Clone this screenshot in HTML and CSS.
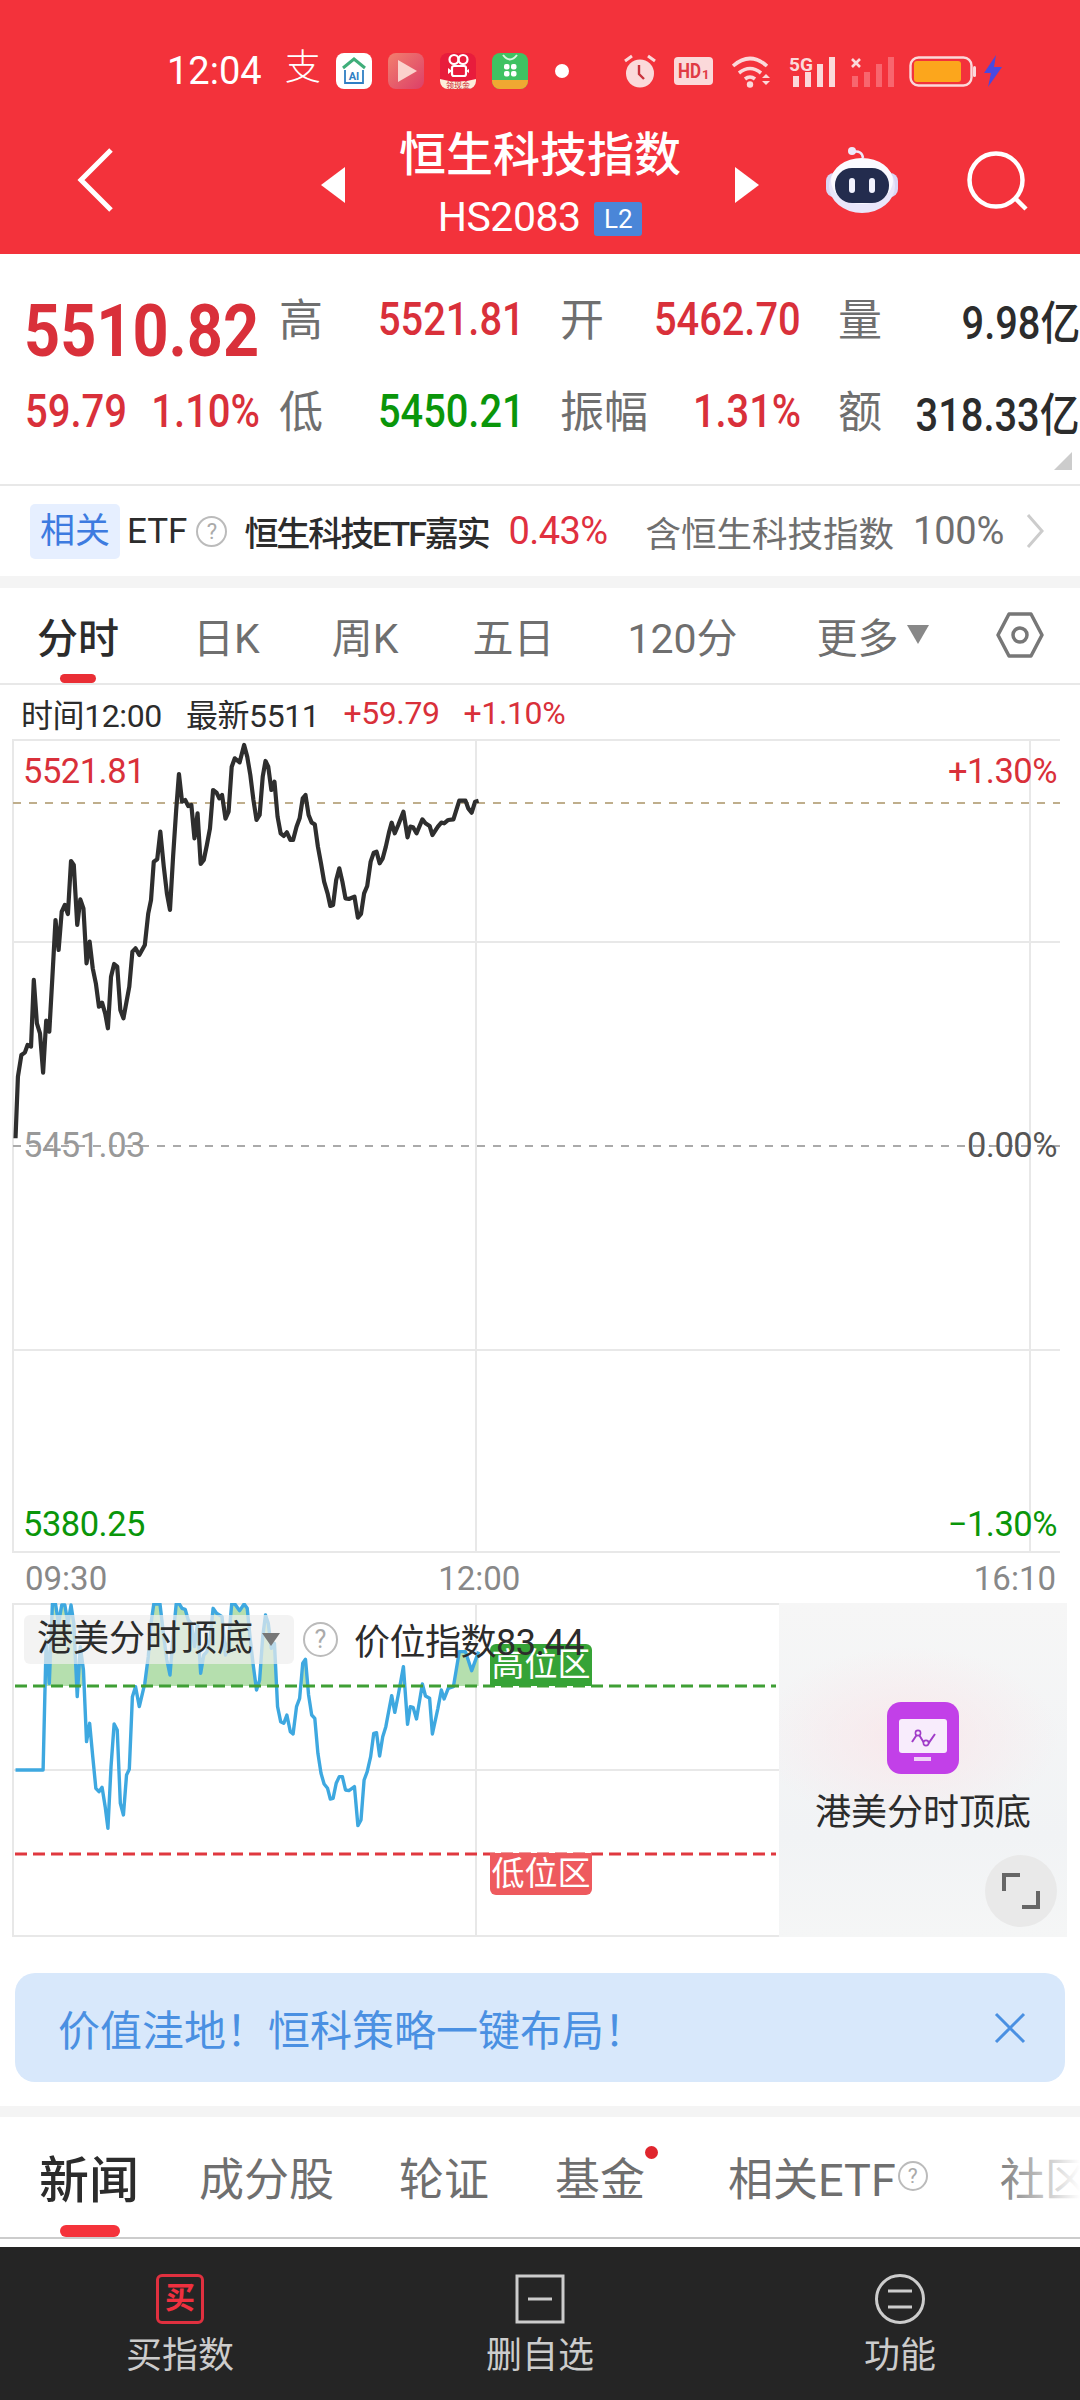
FILE: index.html
```html
<!DOCTYPE html>
<html lang="zh-CN">
  <head>
    <meta charset="UTF-8" />
    <meta name="viewport" content="width=device-width, initial-scale=1.0" />
    <title>恒生科技指数</title>
    <link rel="stylesheet" href="styles.css">
  </head>
  <body>
    <div class="page">
      <header class="topbar">
        <div class="status">
          <span class="clock">12:04</span>
          <span class="st-ali">支</span>
          <svg class="st-app" width="36" height="36" viewBox="0 0 36 36"><rect width="36" height="36" rx="8" fill="#fff"/><path d="M7 15 18 6l11 9" fill="none" stroke="#3fae7a" stroke-width="3"/><path d="M9 17v13h18V17" fill="none" stroke="#2f7fc4" stroke-width="1.8"/><text x="18" y="27" text-anchor="middle" font-size="11" font-weight="700" fill="#2f7fc4">AI</text></svg>
          <svg class="st-app" width="36" height="36" viewBox="0 0 36 36"><defs><linearGradient id="vid" x1="0" y1="0" x2="1" y2="1"><stop offset="0" stop-color="#f27f6e"/><stop offset="1" stop-color="#dc3f68"/></linearGradient></defs><rect width="36" height="36" rx="8" fill="url(#vid)"/><path d="M10 7l19 11-19 11z" fill="#fbd2cc"/></svg>
          <svg class="st-app" width="36" height="36" viewBox="0 0 36 36"><rect width="36" height="36" rx="8" fill="#e81c3c"/><circle cx="14" cy="6.500" r="4.500" fill="none" stroke="#fff" stroke-width="2.200"/><circle cx="23" cy="6.500" r="4.500" fill="none" stroke="#fff" stroke-width="2.200"/><rect x="12" y="13" width="14" height="10" rx="2" fill="none" stroke="#fff" stroke-width="2.200"/><path d="M8 15v6l4-3zM26 18l3-2v4z" fill="#fff"/><path d="M0 26q18 5 36 0v2a8 8 0 0 1-8 8H8a8 8 0 0 1-8-8z" fill="#fdeeda"/><text x="18" y="34.500" text-anchor="middle" font-size="8" fill="#c8202f">领现金</text></svg>
          <svg class="st-app" width="36" height="36" viewBox="0 0 36 36"><rect width="36" height="36" rx="8" fill="#3fc262"/><path d="M11 2q7 9 14 0" fill="none" stroke="#d8f5de" stroke-width="2"/><rect x="12" y="11" width="5.500" height="5.500" rx="2" fill="#fff"/><rect x="19" y="11" width="5.500" height="5.500" rx="2" fill="#fff"/><rect x="12" y="18" width="5.500" height="5.500" rx="2" fill="#fff"/><rect x="19" y="18" width="5.500" height="5.500" rx="2" fill="#fff"/><path d="M0 27h36v1a8 8 0 0 1-8 8H8a8 8 0 0 1-8-8z" fill="#f0a832"/></svg>
          <span class="st-dot"></span>
          <svg class="st-alarm" width="32" height="34" viewBox="0 0 32 34"><circle cx="16" cy="19.500" r="14" fill="#fbd9da"/><path d="M15 11v9l5 5" fill="none" stroke="#c8323c" stroke-width="2.400"/><path d="M1 7l7-5M31 7l-7-5" stroke="#fbd9da" stroke-width="3"/></svg>
          <svg class="st-hd" width="39" height="28" viewBox="0 0 39 28"><rect width="39" height="28" rx="4" fill="#fbd9da"/><text x="4" y="21" font-size="20" font-weight="700" fill="#e03a44" textLength="23" lengthAdjust="spacingAndGlyphs">HD</text><text x="28" y="22" font-size="13" font-weight="700" fill="#e03a44">1</text></svg>
          <svg class="st-wifi" width="39" height="33" viewBox="0 0 39 33"><path d="M1 11q17-15 34 0M7 18q11-9 22 0M13 24q5-4 10 0" fill="none" stroke="#fbd9da" stroke-width="3.600"/><circle cx="18" cy="29.500" r="3.200" fill="#fbd9da"/><path d="M30 23l4-4 4 4zM30 26l4 4 4-4z" fill="#fbd9da"/></svg>
          <svg class="st-sig" width="47" height="33" viewBox="0 0 47 33"><text x="0" y="16" font-size="19" font-weight="700" fill="#fbd9da" textLength="24" lengthAdjust="spacingAndGlyphs">5G</text><path d="M4 21h6v11H4zM16 17h6v15h-6zM28 9h6v23h-6zM40 2h6v30h-6z" fill="#fbd9da"/></svg>
          <svg class="st-sig2" width="44" height="33" viewBox="0 0 44 33"><path d="M1 21h6v11H1zM13 17h6v15h-6zM25 9h6v23h-6zM37 2h6v30h-6z" fill="#f8666e"/><path d="M1 4l8 8M9 4l-8 8" stroke="#fbd9da" stroke-width="2.600"/></svg>
          <svg class="st-bat" width="67" height="31" viewBox="0 0 67 31"><rect x="1.500" y="1.500" width="61" height="28" rx="8" fill="none" stroke="#fbd9da" stroke-width="2.400"/><rect x="5" y="5" width="47" height="21" rx="3" fill="#fca61c"/><rect x="64" y="10" width="3" height="11" rx="1.500" fill="#fbd9da"/></svg>
          <svg class="st-bolt" width="20" height="32" viewBox="0 0 20 32"><path d="M13 0 1 18h7l-3 14L19 12h-8z" fill="#4a4ae0"/></svg>
        </div>
        <div class="nav">
          <svg class="nav-back" width="37" height="66" viewBox="0 0 37 66"><path d="M34 3 4 33l30 30" fill="none" stroke="#fff" stroke-width="5"/></svg>
          <svg class="nav-arrow-l" width="24" height="36" viewBox="0 0 24 36"><path d="M24 0v36L0 18z" fill="#fff"/></svg>
          <div class="nav-title">
            <h1>恒生科技指数</h1>
            <div class="nav-code">HS2083 <span class="badge-l2">L2</span></div>
          </div>
          <svg class="nav-arrow-r" width="24" height="36" viewBox="0 0 24 36"><path d="M0 0v36l24-18z" fill="#fff"/></svg>
          <svg class="nav-robot" width="72" height="67" viewBox="0 0 72 67"><path d="M27 5q9-2 10 6" fill="none" stroke="#eee9fa" stroke-width="2.500"/><circle cx="26" cy="4" r="4" fill="#eee9fa"/><rect x="0" y="26" width="72" height="24" rx="8" fill="#d9d6f4"/><ellipse cx="36" cy="39" rx="33" ry="27" fill="#e9e6fa"/><ellipse cx="36" cy="34" rx="31" ry="23" fill="#fbfaff"/><rect x="9" y="21" width="54" height="35" rx="17" fill="#232c4e"/><rect x="23" y="31" width="6" height="15" rx="3" fill="#f2f3ff"/><rect x="43" y="31" width="6" height="15" rx="3" fill="#f2f3ff"/></svg>
          <svg class="nav-search" width="62" height="62" viewBox="0 0 62 62"><circle cx="30" cy="30" r="26.500" fill="none" stroke="#fff" stroke-width="4.500"/><path d="M50 49l10 10" stroke="#fff" stroke-width="4.500"/></svg>
        </div>
      </header>

      <section class="quote">
        <div class="q-main">
          <div class="q-price">5510.82</div>
        </div>
        <div class="q-cell q-first"><span class="q-label">高</span><span class="q-val up">5521.81</span></div>
        <div class="q-cell q-pad"><span class="q-label">开</span><span class="q-val up">5462.70</span></div>
        <div class="q-cell q-pad2"><span class="q-label">量</span><span class="q-val dark">9.98亿</span></div>
        <div class="q-change up"><span class="q-c1">59.79</span><span class="q-c2">1.10%</span></div>
        <div class="q-cell q-first"><span class="q-label">低</span><span class="q-val down">5450.21</span></div>
        <div class="q-cell q-pad"><span class="q-label">振幅</span><span class="q-val up">1.31%</span></div>
        <div class="q-cell q-pad2"><span class="q-label">额</span><span class="q-val dark">318.33亿</span></div>
        <span class="q-corner"></span>
      </section>

      <section class="etf">
        <span class="etf-tag">相关</span>
        <span class="etf-name">ETF</span>
        <span class="help">?</span>
        <span class="etf-fund">恒生科技ETF嘉实</span>
        <span class="etf-pct">0.43%</span>
        <span class="etf-desc">含恒生科技指数</span>
        <span class="etf-share">100%</span>
        <svg width="18" height="36" viewBox="0 0 18 36"><path d="M2 2l14 16L2 34" fill="none" stroke="#ccc" stroke-width="3"/></svg>
      </section>

      <div class="band"></div>

      <nav class="periods">
        <span class="period active">分时</span>
        <span class="period p-day">日K</span>
        <span class="period p-week">周K</span>
        <span class="period p-five">五日</span>
        <span class="period p-120">120分</span>
        <span class="period p-more">更多</span>
        <span class="more-caret"></span>
        <svg class="period-gear" width="50" height="48" viewBox="0 0 50 48"><path d="M14 3h22l11 21-11 21H14L3 24z" fill="none" stroke="#777" stroke-width="3.500" stroke-linejoin="round"/><circle cx="25" cy="24" r="7" fill="none" stroke="#777" stroke-width="3.500"/></svg>
      </nav>

      <div class="info">
        <span>时间12:00</span>
        <span>最新5511</span>
        <span class="up">+59.79</span>
        <span class="up">+1.10%</span>
      </div>

      <section class="chart">
        <svg class="chart-svg" width="1080" height="814" viewBox="0 739 1080 814">
          <path d="M13 740H1060M13 942H1060M13 1350H1060M13 1552H1060M13 739V1553M476 739V1553M1030 739V1553" fill="none" stroke="#e8e8e8" stroke-width="2"/>
          <path d="M13 803H1060" stroke="#bfae8c" stroke-width="2" stroke-dasharray="8 8"/>
          <path d="M13 1146H1060" stroke="#aaa" stroke-width="2" stroke-dasharray="8 8"/>
          <polyline transform="translate(0 700) scale(.3448 .3333)" vector-effect="non-scaling-stroke" fill="none" stroke="#2e2e2e" stroke-width="4.200" stroke-linejoin="round" points="45,1315 52,1130 62,1065 72,1058 80,1035 90,1040 98,840 107,970 116,1000 125,1118 134,962 143,995 152,830 161,660 170,750 179,635 188,615 197,642 206,483 214,495 224,675 233,598 242,625 251,790 260,725 269,805 278,850 287,920 296,908 305,940 313,985 322,830 331,792 340,800 349,930 358,955 375,860 384,755 393,745 404,765 420,735 430,640 438,600 446,485 456,478 465,395 475,500 484,580 493,630 502,470 511,330 519,222 528,305 537,300 546,318 555,315 564,415 573,340 582,492 591,480 600,435 609,385 618,270 628,278 636,295 644,285 654,356 663,335 672,200 681,175 695,187 708,135 717,170 726,225 735,300 744,360 753,345 762,230 770,183 778,200 787,270 796,245 805,350 814,400 823,408 832,397 842,420 850,420 860,380 869,355 878,295 886,285 895,345 904,368 913,373 922,440 931,490 940,545 950,580 958,618 966,615 975,540 984,505 993,545 1002,595 1012,597 1028,590 1038,653 1047,642 1056,580 1065,558 1075,485 1084,458 1092,455 1101,490 1110,475 1119,440 1128,398 1136,368 1145,400 1155,375 1170,335 1182,412 1190,380 1198,382 1208,400 1225,358 1234,370 1246,378 1254,405 1270,380 1280,368 1288,370 1300,360 1315,358 1332,302 1350,302 1358,325 1368,338 1378,305 1388,302"/>
        </svg>
        <span class="c-label c-high up">5521.81</span>
        <span class="c-pct c-high up">+1.30%</span>
        <span class="c-label c-mid muted">5451.03</span>
        <span class="c-pct c-mid zero">0.00%</span>
        <span class="c-label c-low down">5380.25</span>
        <span class="c-pct c-low down">−1.30%</span>
      </section>

      <div class="axis">
        <span>09:30</span>
        <span class="axis-mid">12:00</span>
        <span class="axis-end">16:10</span>
      </div>

      <section class="sub">
        <svg class="sub-svg" width="1080" height="334" viewBox="0 1603 1080 334">
          <defs><clipPath id="high"><rect x="0" y="1603" width="1080" height="83"/></clipPath></defs>
          <path d="M13 1604H780M13 1770H780M13 1936H780M13 1603V1937M476 1603V1937" fill="none" stroke="#e8e8e8" stroke-width="2"/>
          <g clip-path="url(#high)">
            <polygon transform="translate(0 1580) scale(.3448 .3333)" fill="#b5dfae" points="125,570 130,350 134,180 143,310 152,72 161,72 170,130 179,75 188,75 197,130 206,75 214,130 224,350 233,200 242,270 251,485 260,430 269,530 278,625 287,635 296,622 305,680 313,745 322,560 331,432 340,450 349,670 358,705 367,585 375,568 384,350 393,320 404,380 420,310 430,230 438,130 446,72 464,72 475,170 484,240 493,285 502,170 511,72 519,70 528,85 537,88 546,120 555,130 564,200 573,130 582,280 591,225 600,215 609,180 618,85 628,100 636,105 644,110 654,225 663,180 672,72 681,72 695,92 708,72 717,85 726,180 735,260 744,330 753,300 762,170 770,105 778,130 787,205 796,190 805,380 814,425 823,430 832,405 842,455 850,462 860,380 869,355 878,250 886,238 895,345 904,405 913,415 922,520 931,580 940,612 950,625 958,657 966,655 975,610 984,590 993,590 1002,630 1012,632 1028,620 1038,737 1047,720 1056,600 1065,575 1075,530 1084,460 1092,458 1101,528 1110,470 1119,440 1128,390 1136,347 1145,397 1155,345 1170,260 1182,433 1190,380 1198,382 1208,417 1225,312 1234,348 1246,355 1254,462 1270,385 1280,330 1288,357 1300,325 1315,320 1332,215 1350,215 1368,272 1388,215 1388,570"/>
          </g>
          <polyline transform="translate(0 1580) scale(.3448 .3333)" vector-effect="non-scaling-stroke" fill="none" stroke="#3ea8e0" stroke-width="3.400" stroke-linejoin="round" points="45,570 125,570 130,350 134,180 143,310 152,72 161,72 170,130 179,75 188,75 197,130 206,75 214,130 224,350 233,200 242,270 251,485 260,430 269,530 278,625 287,635 296,622 305,680 313,745 322,560 331,432 340,450 349,670 358,705 367,585 375,568 384,350 393,320 404,380 420,310 430,230 438,130 446,72 464,72 475,170 484,240 493,285 502,170 511,72 519,70 528,85 537,88 546,120 555,130 564,200 573,130 582,280 591,225 600,215 609,180 618,85 628,100 636,105 644,110 654,225 663,180 672,72 681,72 695,92 708,72 717,85 726,180 735,260 744,330 753,300 762,170 770,105 778,130 787,205 796,190 805,380 814,425 823,430 832,405 842,455 850,462 860,380 869,355 878,250 886,238 895,345 904,405 913,415 922,520 931,580 940,612 950,625 958,657 966,655 975,610 984,590 993,590 1002,630 1012,632 1028,620 1038,737 1047,720 1056,600 1065,575 1075,530 1084,460 1092,458 1101,528 1110,470 1119,440 1128,390 1136,347 1145,397 1155,345 1170,260 1182,433 1190,380 1198,382 1208,417 1225,312 1234,348 1246,355 1254,462 1270,385 1280,330 1288,357 1300,325 1315,320 1332,215 1350,215 1368,272 1388,215"/>
          <path d="M15 1686H776" stroke="#3f9f35" stroke-width="3" stroke-dasharray="12 6"/>
          <path d="M15 1854H776" stroke="#e0383f" stroke-width="3" stroke-dasharray="12 6"/>
        </svg>
        <span class="zone zone-high">高位区</span>
        <span class="zone zone-low">低位区</span>
        <div class="sub-head">
          <div class="sub-pill">港美分时顶底<span class="sub-caret"></span></div>
          <span class="help help-lg">?</span>
          <span class="sub-index">价位指数83.44</span>
        </div>
        <aside class="sub-side">
          <svg width="72" height="72" viewBox="0 0 72 72"><rect width="72" height="72" rx="14" fill="#c240e8"/><rect x="12" y="17" width="48" height="34" rx="3" fill="#f8ecfc"/><rect x="27" y="55" width="17" height="4" fill="#f0d0f8"/><path d="M25 40l6-9 6 10 4 1 7-10" fill="none" stroke="#a03cc8" stroke-width="2"/><circle cx="31" cy="31" r="2.600" fill="#f8ecfc" stroke="#a03cc8" stroke-width="1.600"/><circle cx="39" cy="41" r="2.600" fill="#f8ecfc" stroke="#a03cc8" stroke-width="1.600"/></svg>
          <span class="sub-side-name">港美分时顶底</span>
          <span class="expand">
            <svg width="38" height="38" viewBox="0 0 38 38"><path d="M2 19V3h16M20 35h16V19" fill="none" stroke="#666" stroke-width="4"/></svg>
          </span>
        </aside>
      </section>

      <div class="banner">
        <span>价值洼地！恒科策略一键布局！</span>
        <svg width="32" height="32" viewBox="0 0 32 32"><path d="M2 2l28 28M30 2 2 30" stroke="#4a90e2" stroke-width="3"/></svg>
      </div>

      <div class="band band-2"></div>

      <nav class="tabs">
        <span class="tab active">新闻</span>
        <span class="tab t-parts">成分股</span>
        <span class="tab t-warrant">轮证</span>
        <span class="tab t-fund">基金<i class="tab-dot"></i></span>
        <span class="tab t-etf">相关ETF<span class="help help-tab">?</span></span>
        <span class="tab t-social">社区</span>
        <span class="tabs-fade"></span>
      </nav>

      <footer class="bottom">
        <div class="b-item">
          <span class="b-buy">买</span>
          <span class="b-text">买指数</span>
        </div>
        <div class="b-item">
          <svg width="50" height="50" viewBox="0 0 50 50"><rect x="2" y="2" width="46" height="46" fill="none" stroke="#ccc" stroke-width="3"/><path d="M13 25h24" stroke="#ccc" stroke-width="3"/></svg>
          <span class="b-text">删自选</span>
        </div>
        <div class="b-item">
          <svg width="50" height="50" viewBox="0 0 50 50"><circle cx="25" cy="25" r="23.500" fill="none" stroke="#ccc" stroke-width="3"/><path d="M13 17h24M13 33h24" stroke="#ccc" stroke-width="3"/></svg>
          <span class="b-text">功能</span>
        </div>
      </footer>
    </div>
  </body>
</html>
```

FILE: styles.css
```css
:root {
  --red: #f3323b;
  --up: #d9303a;
  --down: #0a960a;
  --dark: #2c2c2c;
  --gray: #6f6f6f;
  --line: #e8e8e8;
  --band: #f4f4f4;
}

* {
  box-sizing: border-box;
}

body {
  margin: 0;
  font-family: Roboto, "Noto Sans CJK SC", sans-serif;
  color: var(--dark);
  background: #fff;
}

.page {
  width: 1080px;
  height: 2400px;
  overflow: hidden;
  display: flex;
  flex-direction: column;
}

.up { color: var(--up); }
.down { color: var(--down); }
.dark { color: var(--dark); }
.muted { color: #999; }
.zero { color: #555; }

/* top bar */
.topbar {
  height: 254px;
  background: var(--red);
  color: #fff;
  flex: none;
}

.status {
  height: 70px;
  margin-top: 36px;
  padding-left: 167px;
  display: flex;
  align-items: center;
}

.clock { font-size: 38px; }
.st-ali {
  width: 35px;
  margin-left: 23px;
  margin-bottom: 6px;
  font-size: 36px;
  line-height: 40px;
  font-weight: 300;
}
.st-app { margin-left: 16px; }
.st-dot {
  width: 14px;
  height: 14px;
  border-radius: 50%;
  background: #fff;
  margin-left: 27px;
}
.st-alarm { margin-left: 55px; }
.st-hd { margin-left: 18px; }
.st-wifi { margin-left: 19px; }
.st-sig { margin-left: 18px; }
.st-sig2 { margin-left: 15px; }
.st-bat { margin-left: 14px; }
.st-bolt { margin-left: 7px; }

.nav {
  height: 148px;
  display: flex;
  align-items: center;
  padding-left: 77px;
}

.nav-arrow-l { margin-left: 207px; margin-top: 10px; }
.nav-arrow-r { margin-top: 10px; }
.nav-title {
  width: 390px;
  margin-top: 6px;
  text-align: center;
}
.nav-title h1 {
  margin: 0;
  font-size: 47px;
  font-weight: 500;
  line-height: 60px;
}
.nav-code {
  margin-top: 8px;
  font-size: 41px;
  line-height: 48px;
  letter-spacing: -0.5px;
}
.badge-l2 {
  display: inline-block;
  width: 48px;
  height: 34px;
  margin-left: 4px;
  background: #4a86d8;
  border-radius: 3px;
  font-size: 26px;
  line-height: 34px;
  letter-spacing: 0;
  vertical-align: 3px;
}
.nav-robot { margin-left: 67px; }
.nav-search { margin-left: 68px; margin-top: 2px; }

/* quote block */
.quote {
  position: relative;
  height: 232px;
  flex: none;
  padding-top: 19px;
  border-bottom: 2px solid var(--line);
  display: grid;
  grid-template-columns: 279px 246px 276px 279px;
  grid-template-rows: 92px 92px;
}

.q-main {
  padding-left: 24px;
  display: flex;
  align-items: center;
}
.q-price {
  margin-top: 24px;
  font-size: 72px;
  font-weight: 700;
  color: var(--up);
  transform: scaleX(0.875);
  transform-origin: left center;
}
.q-change {
  padding: 0 19px 0 25px;
  display: flex;
  justify-content: space-between;
  align-items: center;
  font-size: 46px;
  font-weight: 500;
}
.q-c1 {
  flex: none;
  transform: scaleX(0.87);
  transform-origin: left center;
}
.q-c2 {
  flex: none;
  margin-left: -40px;
  transform: scaleX(0.87);
  transform-origin: right center;
}
.q-cell {
  display: flex;
  justify-content: space-between;
  align-items: center;
}
.q-pad { padding-left: 35px; }
.q-pad2 { padding-left: 37px; }
.q-label {
  margin-bottom: 5px;
  font-size: 44px;
  color: var(--gray);
}
.q-val {
  font-size: 46px;
  font-weight: 500;
  transform: scaleX(0.865);
  transform-origin: right center;
}
.q-corner {
  position: absolute;
  right: 8px;
  bottom: 14px;
  width: 0;
  height: 0;
  border-left: 18px solid transparent;
  border-bottom: 18px solid #ccc;
}

/* related etf row */
.etf {
  height: 90px;
  flex: none;
  padding-left: 30px;
  display: flex;
  align-items: center;
}
.etf-tag {
  width: 90px;
  height: 55px;
  border-radius: 5px;
  background: #e6efff;
  color: #3d7be0;
  font-size: 35px;
  line-height: 55px;
  text-align: center;
}
.etf-name { margin-left: 7px; font-size: 35px; }
.help {
  flex: none;
  display: inline-block;
  width: 31px;
  height: 31px;
  margin-left: 9px;
  border: 2px solid #bbb;
  border-radius: 50%;
  color: #aaa;
  font-size: 22px;
  line-height: 27px;
  text-align: center;
}
.etf-fund {
  margin-left: 17px;
  font-size: 34px;
  font-weight: 500;
  letter-spacing: -2.1px;
}
.etf-pct {
  margin-left: 20px;
  font-size: 38px;
  color: #e0303f;
  letter-spacing: -0.6px;
}
.etf-desc {
  margin-left: 38px;
  font-size: 35.5px;
  color: var(--gray);
}
.etf-share {
  margin-left: 19px;
  font-size: 38px;
  color: var(--gray);
  letter-spacing: -0.2px;
}
.etf svg { margin-left: 22px; }

.band {
  height: 12px;
  flex: none;
  background: var(--band);
}

/* period tabs */
.periods {
  height: 97px;
  flex: none;
  padding: 0 0 2px 37px;
  border-bottom: 2px solid var(--line);
  position: relative;
  display: flex;
  align-items: center;
}
.period {
  font-size: 41px;
  color: var(--gray);
}
.period.active {
  width: 82px;
  color: var(--dark);
  font-weight: 500;
}
.period.active::after {
  content: "";
  position: absolute;
  left: 60px;
  bottom: 0;
  width: 36px;
  height: 9px;
  border-radius: 5px;
  background: #ea2e35;
}
.p-day { margin-left: 74px; }
.p-week { margin-left: 72px; }
.p-five { margin-left: 74px; }
.p-120 { margin-left: 73px; }
.p-more { margin-left: 79px; }
.more-caret {
  margin-left: 8px;
  width: 0;
  height: 0;
  border-left: 11px solid transparent;
  border-right: 11px solid transparent;
  border-top: 19px solid #888;
}
.period-gear { margin-left: 66px; }

.info {
  height: 54px;
  flex: none;
  padding: 2px 0 0 21px;
  display: flex;
  align-items: center;
  gap: 24px;
  font-size: 32px;
  letter-spacing: -0.4px;
}

/* main chart */
.chart {
  position: relative;
  height: 814px;
  flex: none;
}
.chart-svg {
  display: block;
}
.c-label,
.c-pct {
  position: absolute;
  font-size: 34.5px;
  line-height: 40px;
  letter-spacing: -0.5px;
}
.c-label { left: 23px; }
.c-pct { right: 23px; }
.c-high { top: 12px; }
.c-mid { top: 386px; }
.c-low { top: 765px; }

.axis {
  height: 50px;
  flex: none;
  padding: 0 24px 0 25px;
  display: flex;
  align-items: center;
  font-size: 33px;
  color: #888;
}
.axis-mid { margin-left: 331px; }
.axis-end { margin-left: auto; }

/* indicator chart */
.sub {
  position: relative;
  height: 334px;
  flex: none;
}
.sub-svg {
  display: block;
}
.sub-head {
  position: absolute;
  left: 24px;
  top: 10px;
  display: flex;
  align-items: center;
}
.sub-pill {
  width: 270px;
  height: 49px;
  padding-left: 13px;
  border-radius: 6px;
  background: rgba(238, 238, 238, 0.7);
  font-size: 36px;
  line-height: 47px;
  display: flex;
  align-items: center;
}
.sub-caret {
  margin-left: 9px;
  width: 0;
  height: 0;
  border-left: 9px solid transparent;
  border-right: 9px solid transparent;
  border-top: 13px solid #777;
}
.help-lg {
  width: 35px;
  height: 35px;
  margin-left: 9px;
  font-size: 25px;
  line-height: 31px;
}
.sub-index {
  margin-left: 16px;
  font-size: 36px;
  letter-spacing: -0.5px;
}
.zone {
  position: absolute;
  left: 490px;
  width: 102px;
  height: 42px;
  color: #fff;
  font-size: 33px;
  line-height: 42px;
  text-align: center;
}
.zone-high {
  top: 41px;
  background: #36a336;
  border-radius: 6px 6px 0 0;
}
.zone-low {
  top: 250px;
  background: #ee5a5e;
  border-radius: 0 0 6px 6px;
}
.sub-side {
  position: absolute;
  left: 779px;
  top: 0;
  width: 288px;
  height: 334px;
  padding-top: 99px;
  display: flex;
  flex-direction: column;
  align-items: center;
  background:
    radial-gradient(ellipse 150px 90px at 45% 40%, rgba(250, 228, 232, 0.75), rgba(250, 228, 232, 0)),
    linear-gradient(#f6f6f6, #f1f3f5 70%, #f5f6f6);
}
.sub-side-name {
  margin-top: 14px;
  font-size: 36px;
  line-height: 50px;
}
.expand {
  position: absolute;
  left: 206px;
  top: 252px;
  width: 72px;
  height: 72px;
  border-radius: 50%;
  background: #e9e9e9;
  display: flex;
  align-items: center;
  justify-content: center;
}

/* banner */
.banner {
  height: 109px;
  flex: none;
  margin: 36px 15px 0;
  padding: 0 39px 0 43px;
  border-radius: 20px;
  background: #d8e8fb;
  color: #4a90e2;
  font-size: 42px;
  display: flex;
  align-items: center;
  justify-content: space-between;
}
.band-2 {
  margin-top: 24px;
  height: 11px;
}

/* content tabs */
.tabs {
  position: relative;
  height: 122px;
  flex: none;
  padding: 0 0 2px 39px;
  border-bottom: 2px solid #ccc;
  display: flex;
  align-items: center;
  white-space: nowrap;
  overflow: hidden;
}
.tab {
  font-size: 45px;
  color: var(--gray);
  display: flex;
  align-items: center;
  flex: none;
}
.tab.active {
  font-size: 50px;
  font-weight: 500;
  color: var(--dark);
}
.tab.active::after {
  content: "";
  position: absolute;
  left: 60px;
  bottom: 0;
  width: 60px;
  height: 12px;
  border-radius: 6px;
  background: #f5333b;
}
.t-parts { margin-left: 60px; }
.t-warrant { margin-left: 65px; }
.t-fund { margin-left: 66px; position: relative; }
.t-etf { margin-left: 83px; }
.t-social { margin-left: 72px; }
.tab-dot {
  position: absolute;
  right: -13px;
  top: 2px;
  width: 13px;
  height: 13px;
  border-radius: 50%;
  background: #e0262e;
}
.help-tab {
  width: 30px;
  height: 30px;
  margin-left: 2px;
  font-size: 21px;
  line-height: 26px;
}
.tabs-fade {
  position: absolute;
  right: 0;
  top: 0;
  width: 90px;
  height: 100%;
  background: linear-gradient(to right, rgba(255, 255, 255, 0), #fff);
}

/* bottom toolbar */
.bottom {
  margin-top: 8px;
  flex: 1;
  background: #252525;
  padding-top: 27px;
  display: grid;
  grid-template-columns: repeat(3, 1fr);
  justify-items: center;
  align-content: start;
}
.b-item {
  display: flex;
  flex-direction: column;
  align-items: center;
}
.b-item svg { display: block; }
.b-buy {
  width: 48px;
  height: 50px;
  border: 3px solid #e0303f;
  border-radius: 6px;
  color: #f0303f;
  font-size: 30px;
  font-weight: 700;
  line-height: 42px;
  text-align: center;
}
.b-text {
  margin-top: 7px;
  font-size: 36px;
  line-height: 50px;
  color: #ccc;
}
```
